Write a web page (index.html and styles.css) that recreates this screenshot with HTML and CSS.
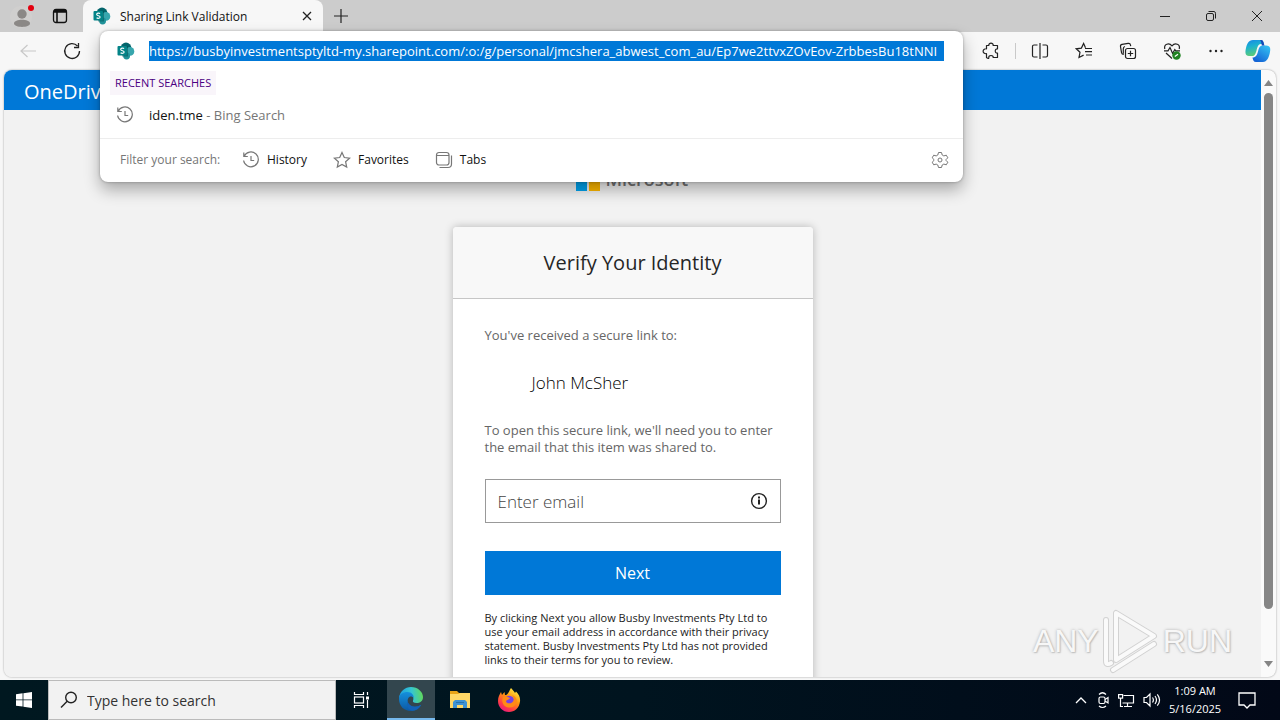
FILE: index.html
```html
<!DOCTYPE html>
<html lang="en">
<head>
<meta charset="utf-8">
<title>Sharing Link Validation</title>
<link rel="stylesheet" href="styles.css">
</head>
<body>
<svg class="defs" aria-hidden="true">
  <symbol id="sharepoint" viewBox="0 0 18 18">
    <circle cx="9" cy="6" r="5.4" fill="#03646b"/><circle cx="13" cy="9.4" r="4.3" fill="#37a6ad"/><circle cx="9.6" cy="14" r="3.4" fill="#1f9299"/>
    <path d="M5 4h6v10.500H5z" fill="#024b50" opacity=".5"/>
    <rect x="0.500" y="4" width="9.500" height="9.500" rx="1" fill="#038387"/>
    <path d="M7.100 6.600C6 5.800 3.600 6 3.700 7.500c.1 1.600 3.400 1 3.400 2.600 0 1.400-2.400 1.500-3.500.6" fill="none" stroke="#fff" stroke-width="1.200"/>
  </symbol>
  <symbol id="history" viewBox="0 0 18 18">
    <path d="M2.200 5.200A7.400 7.400 0 1 1 1.600 9.500M1.800 1.500v4h4M9 5v4.500h3.200" fill="none" stroke="currentColor" stroke-width="1.200"/>
  </symbol>
</svg>

<header class="tabstrip">
  <button class="icon-btn profile" aria-label="Profile">
    <svg width="24" height="24" viewBox="0 0 24 24"><circle cx="11" cy="13" r="11" fill="#d0cfce"/><circle cx="12" cy="10" r="4.700" fill="#8b8886"/><path d="M4 19.500c0-5 16-5 16 0 0 4.500-16 4.500-16 0z" fill="#8b8886"/><circle cx="21" cy="4" r="3" fill="#e3000f"/></svg>
  </button>
  <button class="icon-btn tabmenu" aria-label="Tab actions">
    <svg width="16" height="16" viewBox="0 0 16 16" fill="none" stroke="#111" stroke-width="1.300"><rect x="1.500" y="1.500" width="13" height="13" rx="2.500"/><path d="M2 4h12M5 4v10" stroke-width="1.600"/><path d="M2 2.800h12" stroke-width="2.400"/></svg>
  </button>
  <div class="tab">
    <svg width="18" height="18"><use href="#sharepoint"/></svg>
    <span class="tab-title">Sharing Link Validation</span>
    <button class="icon-btn" aria-label="Close tab"><svg width="10" height="10" viewBox="0 0 10 10" stroke="#222" stroke-width="1.300"><path d="M1 1l8 8M9 1L1 9"/></svg></button>
  </div>
  <button class="icon-btn newtab" aria-label="New tab"><svg width="14" height="14" viewBox="0 0 14 14" stroke="#222" stroke-width="1.200"><path d="M7 0v14M0 7h14"/></svg></button>
  <div class="window-controls">
    <button class="icon-btn" aria-label="Minimize"><svg width="12" height="12" viewBox="0 0 12 12" stroke="#222"><path d="M1 6.500h10"/></svg></button>
    <button class="icon-btn" aria-label="Restore"><svg width="12" height="12" viewBox="0 0 12 12" fill="none" stroke="#222"><rect x="1.500" y="3.500" width="7" height="7" rx="1.500"/><path d="M3.500 1.500H9a1.800 1.800 0 0 1 1.500 1.800V8.500"/></svg></button>
    <button class="icon-btn" aria-label="Close"><svg width="12" height="12" viewBox="0 0 12 12" stroke="#222"><path d="M1 1l10 10M11 1L1 11"/></svg></button>
  </div>
</header>

<nav class="toolbar" aria-label="Browser toolbar">
  <button class="icon-btn" aria-label="Back"><svg width="18" height="18" viewBox="0 0 18 18" fill="none" stroke="#c8c8c8" stroke-width="1.200"><path d="M17 9H2M8.500 3L2 9l6.500 6"/></svg></button>
  <button class="icon-btn" aria-label="Refresh"><svg width="18" height="18" viewBox="0 0 18 18" fill="none" stroke="#222" stroke-width="1.300"><path d="M14.500 4A7.400 7.400 0 1 0 16.500 9M15.500 1v4.500H11"/></svg></button>
  <div class="tools">
    <button class="icon-btn" aria-label="Extensions"><svg width="18" height="18" viewBox="0 0 18 18" fill="none" stroke="#222" stroke-width="1.200" stroke-linejoin="round"><path d="M4.500 3.500h2.300c-.3-3.200 4.700-3.200 4.400 0h4.300v3.300c-3-.3-3 4.700 0 4.400v4.300h-4.300c.1-1.500-.8-2-2.200-2s-2.300.5-2.200 2c.3 2-2.300 0-2.300 0v-3.800c-4.500.5-4.500-5.400 0-4.900z"/></svg></button>
    <span class="divider"></span>
    <button class="icon-btn" aria-label="Split screen"><svg width="18" height="18" viewBox="0 0 18 18" fill="none" stroke="#222" stroke-width="1.200"><path d="M9 1v16M6.500 3H3a1.500 1.500 0 0 0-1.500 1.500v9A1.500 1.500 0 0 0 3 15h3.500M11.500 3H15a1.500 1.500 0 0 1 1.500 1.500v9A1.500 1.500 0 0 1 15 15h-3.500"/></svg></button>
    <button class="icon-btn" aria-label="Favorites bar"><svg width="18" height="18" viewBox="0 0 18 18" fill="none" stroke="#222" stroke-width="1.200"><path d="M10.500 5.800L8.600 1.500 6.400 6.100 1.300 6.800l3.700 3.500-1 5.200 4.600-2.400M10 6.500h7M10 9.700h7M11 13h6"/></svg></button>
    <button class="icon-btn" aria-label="Collections"><svg width="18" height="18" viewBox="0 0 18 18" fill="none" stroke="#222" stroke-width="1.200"><rect x="6.500" y="6.500" width="10" height="10" rx="2"/><path d="M11.500 8.800v5.400M8.800 11.500h5.400M4.800 12.500c-1.200 0-2-.5-2.200-1.500L1.500 4.600c-.2-1.200.5-2 1.600-2.200l6-1c1.300-.2 2.200.4 2.400 1.600l.2 1.200M6 4.500c-1.200.3-1.700 1-1.700 2.200v5"/></svg></button>
    <button class="icon-btn" aria-label="Browser essentials"><svg width="18" height="18" viewBox="0 0 18 18" fill="none" stroke="#222" stroke-width="1.200"><path d="M1.800 7C.6 2 6 .4 9 3.800 12 .4 17.600 2 16.200 7M1 8.800h4L7 5.500l2.600 6 2.200-4 1 1.300H17M3 11l6 5.500"/><circle cx="13.500" cy="13.500" r="4.200" fill="#218322" stroke="none"/><path d="M11.800 14.500l3.200-2.300" stroke="#fff"/></svg></button>
    <button class="icon-btn" aria-label="Settings and more"><svg width="18" height="18" viewBox="0 0 18 18" fill="#222"><circle cx="3.500" cy="9" r="1.200"/><circle cx="9" cy="9" r="1.200"/><circle cx="14.500" cy="9" r="1.200"/></svg></button>
    <button class="icon-btn copilot" aria-label="Copilot"><svg width="26" height="24" viewBox="0 0 26 24">
      <defs><linearGradient id="cg1" x1="0" y1="0" x2="0.300" y2="1"><stop offset="0" stop-color="#1785e8"/><stop offset=".45" stop-color="#1bb2cf"/><stop offset="1" stop-color="#5ccb78"/></linearGradient><linearGradient id="cg2" x1="1" y1="0" x2="0.300" y2="1"><stop offset="0" stop-color="#36c8f5"/><stop offset="1" stop-color="#1463d5"/></linearGradient></defs>
      <path d="M8 1h8c2 0 2.500 2 3 4h-3c-3 0-3.500 3-4.500 6.500C10.500 15 9.800 17 7 17H4c-4 0-4-4-3-8S3.500 1 8 1z" fill="url(#cg1)"/>
      <path d="M18 23h-7c-2.500 0-3-2-3.500-4.500C11 18.500 12 16 13 12.500 14 9 14.500 6.500 18 6.500h3c5 0 4.700 4 3.700 8S22 23 18 23z" fill="url(#cg2)"/>
      <path d="M15 1h1c2 0 2.500 2 3 4.200l.6 1.300H17c-.8-1.500-.5-4-2-5.500z" fill="#1548b8"/></svg></button>
  </div>
</nav>

<section class="omnibox" aria-label="Address bar">
  <div class="url-row">
    <svg width="18" height="18"><use href="#sharepoint"/></svg>
    <input class="url" type="text" aria-label="Address" value="https://busbyinvestmentsptyltd-my.sharepoint.com/:o:/g/personal/jmcshera_abwest_com_au/Ep7we2ttvxZOvEov-ZrbbesBu18tNNI">
  </div>
  <h2 class="recent">RECENT SEARCHES</h2>
  <a class="suggestion" href="#"><svg width="18" height="18"><use href="#history"/></svg><span><b>iden.tme</b> - Bing Search</span></a>
  <div class="filters">
    <span class="filter-label">Filter your search:</span>
    <button class="filter"><svg width="18" height="18"><use href="#history"/></svg>History</button>
    <button class="filter"><svg width="18" height="18" viewBox="0 0 18 18" fill="none" stroke="currentColor" stroke-width="1.200"><path d="M9 1.500l2.300 5 5.300.6-4 3.600 1.100 5.400L9 13.400l-4.700 2.700 1.100-5.400-4-3.600 5.300-.6z"/></svg>Favorites</button>
    <button class="filter"><svg width="18" height="18" viewBox="0 0 18 18" fill="none" stroke="currentColor" stroke-width="1.200"><rect x="1.500" y="1.500" width="12.500" height="12.500" rx="2.500"/><path d="M1.500 4.500H14M16.500 4.500V13a3.500 3.500 0 0 1-3.500 3.500H4.500"/></svg>Tabs</button>
    <button class="icon-btn gear" aria-label="Search settings"><svg width="18" height="18" viewBox="0 0 18 18" fill="none" stroke="#777" stroke-linejoin="round"><path d="M7.500 1.500h3l.7 2.500 1.600.9 2.500-.7 1.500 2.600L15 8.600v.8l1.800 1.800-1.500 2.600-2.500-.7-1.600.9-.7 2.500h-3L6.800 14l-1.600-.9-2.500.7-1.500-2.600L3 9.400v-.8L1.200 6.800l1.500-2.600 2.500.7L6.800 4z"/><circle cx="9" cy="9" r="2"/></svg></button>
  </div>
</section>

<div class="viewport">
  <div class="page">
    <header class="brandbar">OneDrive</header>
    <main class="content">
      <div class="ms-logo">
        <svg width="24" height="24" viewBox="0 0 24 24"><path fill="#f25022" d="M0 0h11v11H0z"/><path fill="#7fba00" d="M13 0h11v11H13z"/><path fill="#00a4ef" d="M0 13h11v11H0z"/><path fill="#ffb900" d="M13 13h11v11H13z"/></svg>
        <span>Microsoft</span>
      </div>
      <form class="card">
        <h1>Verify Your Identity</h1>
        <div class="card-body">
          <p class="note">You've received a secure link to:</p>
          <p class="name">John McSher</p>
          <p class="note"><label for="email">To open this secure link, we'll need you to enter the email that this item was shared to.</label></p>
          <div class="field">
            <input id="email" type="email" placeholder="Enter email">
            <svg width="18" height="18" viewBox="0 0 18 18"><circle cx="9" cy="9" r="7.400" fill="none" stroke="#222" stroke-width="1.400"/><path d="M8 7.500h2v5H8zM8 4.500h2v2H8z" fill="#222"/></svg>
          </div>
          <button class="next" type="button">Next</button>
          <p class="fine">By clicking Next you allow Busby Investments Pty Ltd to use your email address in accordance with their privacy statement. Busby Investments Pty Ltd has not provided links to their terms for you to review.</p>
        </div>
      </form>
    </main>
  </div>
  <div class="scrollbar" aria-hidden="true">
    <svg width="9" height="6" viewBox="0 0 9 6"><path d="M0 6l4.500-6L9 6z" fill="#858585"/></svg>
    <span class="thumb"></span>
    <svg width="9" height="6" viewBox="0 0 9 6"><path d="M0 0l4.500 6L9 0z" fill="#858585"/></svg>
  </div>
</div>

<div class="watermark" aria-hidden="true">
  <span>ANY</span>
  <svg width="60" height="66" viewBox="0 0 60 66" fill="none" stroke-linejoin="round" stroke-linecap="round"><g stroke="#d2d2d2" stroke-width="6"><path d="M5 12v41q0 5 5 2M15 9v43l38-24L15 5zM12 62l41-26"/></g><g stroke="#fafafa" stroke-width="4"><path d="M5 12v41q0 5 5 2M15 9v43l38-24L15 5zM12 62l41-26"/></g></svg>
  <span>RUN</span>
</div>

<footer class="taskbar">
  <button class="icon-btn start" aria-label="Start"><svg width="16" height="16" viewBox="0 0 16 16" fill="#fff"><path d="M0 2.300L6.600 1.300v6.200H0zM7.400 1.200L16 0v7.500H7.400zM0 8.300h6.600v6.300L0 13.700zM7.400 8.300H16V16l-8.600-1.200z"/></svg></button>
  <label class="search">
    <svg width="18" height="18" viewBox="0 0 18 18" fill="none" stroke="#222" stroke-width="1.400"><circle cx="11" cy="6.500" r="5.300"/><path d="M7.200 10.200L1 16.500"/></svg>
    <input type="text" placeholder="Type here to search" aria-label="Type here to search">
  </label>
  <button class="icon-btn app" aria-label="Task view"><svg width="18" height="16" viewBox="0 0 18 16" fill="none" stroke="#fff" stroke-width="1.200"><path d="M1.500 0v2.500h9V0M1.500 16v-2.500h9V16M14.500 0v3M14.500 8v8"/><rect x="1.500" y="5" width="9" height="6"/><path d="M13 4.500h3v3h-3z" fill="#fff" stroke="none"/></svg></button>
  <button class="icon-btn app active" aria-label="Microsoft Edge"><svg width="24" height="24" viewBox="0 0 24 24">
    <defs><linearGradient id="eg1" x1="0" y1=".5" x2="1" y2=".4"><stop offset="0" stop-color="#1b9de2"/><stop offset=".55" stop-color="#36c6d0"/><stop offset="1" stop-color="#62d957"/></linearGradient><linearGradient id="eg2" x1="0" y1="0" x2="0" y2="1"><stop offset="0" stop-color="#1590dc"/><stop offset="1" stop-color="#0c59a4"/></linearGradient></defs>
    <path d="M0 11C1 4 6 0 12 0c7 0 12 5 12 10 0 4-3 6-6.500 6-3 0-4-1.200-3.500-2.200C16.500 8 8 4 0 11z" fill="url(#eg1)"/>
    <path d="M0 12C0 7 4 5 8.500 5c4 0 6.500 3 6.200 6-1-1.200-2.500-1.800-4-1.200-4 2-2 10 4.500 10 3 0 5.500-1 7-2C20 22 16.500 24 12 24 5 24 0 19 0 12z" fill="url(#eg2)"/>
    <path d="M8.500 14c-1.500 5 1 9 5 9.800 4-.3 7-2.500 8.700-6-6 4-13 1-13.700-3.800z" fill="#1262b7"/></svg></button>
  <button class="icon-btn app" aria-label="File Explorer"><svg width="22" height="20" viewBox="0 0 22 20"><path d="M1 1h7l2 2h11v4H1z" fill="#e8a317"/><path d="M1 4h8l2-1h10v15H1z" fill="#ffd766"/><path d="M4 18v-6l2-2h10l2 2v6h-4v-3H8v3z" fill="#3f92d2"/><path d="M7 12h8v1H7z" fill="#2671ad"/></svg></button>
  <button class="icon-btn app" aria-label="Firefox"><svg width="24" height="24" viewBox="0 0 24 24">
    <defs><linearGradient id="fg" x1=".8" y1="0" x2=".2" y2="1"><stop offset="0" stop-color="#fff04a"/><stop offset=".4" stop-color="#ff980e"/><stop offset=".75" stop-color="#ff3b47"/><stop offset="1" stop-color="#e31587"/></linearGradient></defs>
    <path d="M14 0c2 2 3 3.500 4 5l1-1.500c3 3 4.500 6 4 10C22.300 20 17.500 24 12 24 5.500 24 1 19 1 13c0-4 1.500-6.500 3-9l1 3 2.500-3 .5 3c3 .5 4-4 6-7z" fill="url(#fg)"/><circle cx="12.200" cy="13" r="5.200" fill="#7542e5"/><path d="M6 9c3-1 5 0 7 1-1 2-3 1.500-4 3 0 2.500 4 3 6 1.500 3-2 1.500-6-.5-7.500 4 1 6 4 5 8-1 3-4 5-8 4.500C6.500 19 4 14 6 9z" fill="#ff8a16"/></svg></button>
  <div class="tray">
    <svg width="12" height="18" viewBox="0 0 12 18" fill="none" stroke="#fff" stroke-width="1.300"><path d="M1 12l5-5 5 5"/></svg>
    <svg width="14" height="18" viewBox="0 0 14 18" fill="none" stroke="#fff" stroke-width="1.200"><rect x="4" y="6" width="6" height="6.500" rx="1.500"/><path d="M10 8.500l3-2v5.500l-3-2M4 3.500Q7.500 0 11 3.500M4 15Q7.500 18 11 15"/></svg>
    <svg width="18" height="18" viewBox="0 0 18 18" fill="none" stroke="#fff" stroke-width="1.200"><path d="M6.500 4.500h10v7.500H5.500M10.500 12v3M7 15.500h8M3.500 7v8.500H6"/><rect x="1.600" y="3.600" width="4" height="3.500"/></svg>
    <svg width="18" height="18" viewBox="0 0 18 18" fill="none" stroke="#fff" stroke-width="1.200"><path d="M1 6.500h2.500L7 3v12l-3.500-3.500H1zM9.500 6.500q1.800 2.500 0 5M12 5q3 4 0 8M14.300 3.300q4.500 5.700 0 11.400"/></svg>
    <time class="clock"><span>1:09 AM</span><span>5/16/2025</span></time>
    <svg width="18" height="18" viewBox="0 0 18 18" fill="none" stroke="#fff" stroke-width="1.300"><path d="M1 2h16v12h-5l-3 3-3-3H1z"/></svg>
  </div>
</footer>
</body>
</html>
```
FILE: styles.css
```css
* { box-sizing: border-box; }
body {
  margin: 0;
  height: 100vh;
  display: flex;
  flex-direction: column;
  position: relative;
  overflow: hidden;
  background: #f7f7f7;
  color: #222;
  font-family: "Open Sans", "Noto Sans", sans-serif;
  font-size: 12px;
}
.defs { position: absolute; width: 0; height: 0; }
svg { display: block; flex: none; }
button, input { font: inherit; color: inherit; }
.icon-btn { display: flex; align-items: center; justify-content: center; padding: 0; border: 0; background: none; }

.tabstrip { flex: none; display: flex; align-items: center; height: 32px; background: #cccccc; }
.profile { margin-left: 10px; }
.tabmenu { margin-left: 18px; }
.tab {
  display: flex; align-items: center; gap: 9px;
  align-self: stretch;
  width: 240px; margin-left: 15px; padding: 0 11px 0 10px;
  border-radius: 8px 8px 0 0;
  background: #f7f7f7;
}
.tab-title { flex: 1; color: #111; }
.newtab { margin-left: 11px; }
.window-controls { margin-left: auto; margin-right: 17px; display: flex; gap: 34px; }

.toolbar { flex: none; display: flex; align-items: center; gap: 26px; height: 38px; padding: 0 9px 0 19px; }
.tools { display: flex; align-items: center; gap: 26px; margin-left: auto; }
.divider { width: 1px; height: 16px; margin: 0 -11px 0 -11px; background: #c9c9c9; }
.copilot { margin-left: -6px; }

.omnibox {
  position: absolute; z-index: 2;
  top: 31px; left: 100px; right: 317px;
  border-radius: 8px;
  background: #fff;
  box-shadow: 0 8px 16px rgba(0, 0, 0, .3), 0 0 3px rgba(0, 0, 0, .3);
}
.url-row { display: flex; align-items: center; gap: 14px; height: 40px; padding: 0 19px 0 17px; }
.url {
  flex: 1; min-width: 0; height: 20px; padding: 0; border: 0;
  background: #0078d7; color: #fff;
  font-size: 13px;
}
.recent {
  width: max-content; margin: 0 0 0 10px; padding: 0 5px;
  background: #f9f5fa; color: #4b0082;
  font-size: 11px; font-weight: 400; line-height: 24px;
}
.suggestion {
  display: flex; align-items: center; gap: 15px;
  height: 43px; padding: 0 16px 4px;
  color: #767676; font-size: 13px; text-decoration: none;
}
.suggestion b { color: #111; font-weight: 400; }
.suggestion svg, .filter svg { color: #777; }
.filters { display: flex; align-items: center; height: 44px; padding: 0 14px 2px 20px; border-top: 1px solid #ededed; }
.filter-label { width: 122px; color: #767676; }
.filter { display: flex; align-items: center; gap: 7px; margin-right: 26px; padding: 0; border: 0; background: none; color: #111; }
.gear { margin-left: auto; }

.viewport {
  flex: 1; min-height: 0; display: flex;
  margin: 0 4px 3px;
  overflow: hidden;
  border-radius: 8px;
  background: #fafafa;
  box-shadow: 0 0 2px rgba(0, 0, 0, .4);
}
.page { flex: 1; min-width: 0; overflow: hidden; background: #f2f2f2; }
.brandbar { height: 40px; padding-left: 20px; background: #0078d7; color: #fff; font-size: 20px; line-height: 44px; }
.content { display: flex; flex-direction: column; align-items: center; padding-top: 57px; }
.ms-logo { display: flex; align-items: center; gap: 6px; width: 114px; height: 24px; margin-bottom: 36px; color: #737373; font-size: 18px; font-weight: 600; line-height: 24px; }
.card { width: 360px; border-radius: 4px; background: #fff; box-shadow: 0 0 8px rgba(0, 0, 0, .25); }
.card h1 {
  margin: 0; border-bottom: 1px solid #c6c6c6; border-radius: 4px 4px 0 0;
  background: #f8f8f8; color: #262626;
  font-size: 20px; font-weight: 400; line-height: 71px; text-align: center;
}
.card-body { padding: 28px 32px; }
.card p { margin: 0; }
.note { color: #666; font-size: 13px; line-height: 17px; }
.card .name { margin: 27px 0 27px 47px; font-size: 17px; font-weight: 300; line-height: 24px; color: #000; }
.field { display: flex; align-items: center; height: 44px; margin-top: 23px; padding: 0 12px; border: 1px solid #999; }
.field input { flex: 1; min-width: 0; padding: 0; border: 0; outline: 0; background: none; font-size: 17px; font-weight: 300; }
.field input::placeholder { color: #444; }
.next { display: block; width: 100%; height: 44px; margin: 28px 0 16px; border: 0; background: #0078d7; color: #fff; font-size: 16px; }
.fine { font-size: 11px; line-height: 14px; }

.scrollbar { display: flex; flex-direction: column; align-items: center; gap: 7px; width: 15px; padding: 10px 0; }
.thumb { width: 9px; height: 516px; border-radius: 5px; background: #868686; }
.scrollbar svg:last-child { margin-top: auto; }

.watermark {
  position: absolute; z-index: 1; right: 48px; bottom: 46px;
  display: flex; align-items: center; gap: 2px;
  color: #f7f7f7;
  font-family: "Liberation Sans", sans-serif;
  font-size: 32px; line-height: 66px;
  text-shadow: 0 0 3px #aaa, 1px 1px 1px #ccc;
}

.taskbar { flex: none; display: flex; align-items: center; height: 40px; background: linear-gradient(90deg, #001820, #00141f 50%, #020817); }
.start { width: 48px; height: 40px; }
.search { display: flex; align-items: center; gap: 9px; width: 288px; height: 40px; padding: 0 11px; border: 1px solid #bbb; background: #f2f2f2; }
.search input { flex: 1; min-width: 0; padding: 0; border: 0; background: none; font-size: 14px; }
.search input::placeholder { color: #333; }
.app { width: 48px; height: 40px; margin-right: 1px; }
.app.active { border-bottom: 2px solid #76b9ed; background: #33464e; }
.search + .app { margin-left: 2px; }
.tray { display: flex; align-items: center; gap: 8px; margin-left: auto; padding-right: 24px; }
.clock { display: flex; flex-direction: column; width: 52px; margin-right: 9px; color: #fff; line-height: 18px; text-align: center; font-size: 11px; white-space: nowrap; }
```
